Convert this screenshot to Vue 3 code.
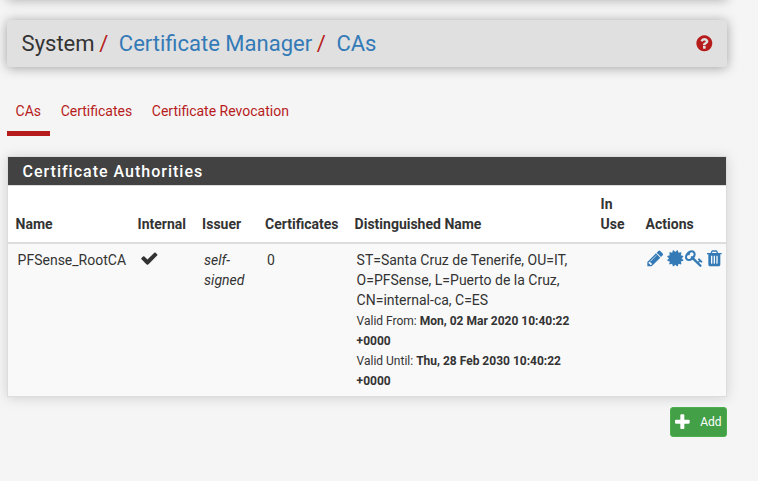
<script setup>
const icons = {
  help: 'M1024 1376v-192q0-14-9-23t-23-9h-192q-14 0-23 9t-9 23v192q0 14 9 23t23 9h192q14 0 23-9t9-23zm256-672q0-88-55.5-163t-138.5-116-170-41q-243 0-371 213-15 24 8 42l132 100q7 6 19 6 16 0 25-12 53-68 86-92 34-24 86-24 48 0 85.5 26t37.5 59q0 38-20 61t-68 45q-63 28-115.5 86.5t-52.5 125.5v36q0 14 9 23t23 9h192q14 0 23-9t9-23q0-19 21.5-49.5t54.5-49.5q32-18 49-28.5t46-35 44.5-48 28-60.5 12.5-81zm384 192q0 209-103 385.5t-279.5 279.5-385.5 103-385.5-103-279.5-279.5-103-385.5 103-385.5 279.5-279.5 385.5-103 385.5 103 279.5 279.5 103 385.5z',
  check: 'M1671 566q0 40-28 68l-724 724-136 136q-28 28-68 28t-68-28l-136-136-362-362q-28-28-28-68t28-68l136-136q28-28 68-28t68 28l294 295 656-657q28-28 68-28t68 28l136 136q28 28 28 68z',
  plus: 'M1600 736v192q0 40-28 68t-68 28h-416v416q0 40-28 68t-68 28h-192q-40 0-68-28t-28-68v-416h-416q-40 0-68-28t-28-68v-192q0-40 28-68t68-28h416v-416q0-40 28-68t68-28h192q40 0 68 28t28 68v416h416q40 0 68 28t28 68z'
}
const actions = [
  { name: 'Edit', d: 'M491 1536l91-91-235-235-91 91v107h128v128h107zm523-928q0-22-22-22-10 0-17 7l-542 542q-7 7-7 17 0 22 22 22 10 0 17-7l542-542q7-7 7-17zm-54-192l416 416-832 832h-416v-416zm683 96q0 53-37 90l-166 166-416-416 166-165q36-38 90-38 53 0 91 38l235 234q37 39 37 91z' },
  { name: 'Export CA', d: 'M1504 896l138 135q30 28 20 70-12 41-52 51l-188 48 53 186q12 41-19 70-29 31-70 19l-186-53-48 188q-10 40-51 52-12 2-19 2-31 0-51-22l-135-138-135 138q-28 30-70 20-41-11-51-52l-48-188-186 53q-41 12-70-19-31-29-19-70l53-186-188-48q-40-10-52-51-10-42 20-70l138-135-138-135q-30-28-20-70 12-41 52-51l188-48-53-186q-12-41 19-70 29-31 70-19l186 53 48-188q10-41 51-51 41-12 70 19l135 139 135-139q29-30 70-19 41 10 51 51l48 188 186-53q41-12 70 19 31 29 19 70l-53 186 188 48q40 10 52 51 10 42-20 70z' },
  { name: 'Export key', d: 'M832 512q0-80-56-136t-136-56-136 56-56 136q0 42 19 83-41-19-83-19-80 0-136 56t-56 136 56 136 136 56 136-56 56-136q0-42-19-83 41 19 83 19 80 0 136-56t56-136zm851 704q0 17-49 66t-66 49q-9 0-28.5-16t-36.5-33-38.5-40-24.5-26l-96 96 220 220q28 28 28 68 0 42-39 81t-81 39q-40 0-68-28l-671-671q-176 131-365 131-163 0-265.5-102.5t-102.5-265.5q0-160 95-313t248-248 313-95q163 0 265.5 102.5t102.5 265.5q0 189-131 365l355 355 96-96q-3-3-26-24.5t-40-38.5-33-36.5-16-28.5q0-17 49-66t66-49q13 0 23 10 6 6 46 44.5t82 79.5 86.5 86 73 78 28.5 41z' },
  { name: 'Delete CA', d: 'M704 1376v-704q0-14-9-23t-23-9h-64q-14 0-23 9t-9 23v704q0 14 9 23t23 9h64q14 0 23-9t9-23zm256 0v-704q0-14-9-23t-23-9h-64q-14 0-23 9t-9 23v704q0 14 9 23t23 9h64q14 0 23-9t9-23zm256 0v-704q0-14-9-23t-23-9h-64q-14 0-23 9t-9 23v704q0 14 9 23t23 9h64q14 0 23-9t9-23zm-544-992h448l-48-117q-7-9-17-11h-317q-10 2-17 11zm928 32v64q0 14-9 23t-23 9h-96v948q0 83-47 143.5t-113 60.5h-832q-66 0-113-58.5t-47-141.5v-952h-96q-14 0-23-9t-9-23v-64q0-14 9-23t23-9h309l70-167q15-37 54-63t79-26h320q40 0 79 26t54 63l70 167h309q14 0 23 9t9 23z' }
]
const tabs = ['CAs', 'Certificates', 'Certificate Revocation']
</script>

<template>
  <div class="page">
    <div class="topbar"></div>
    <header class="header">
      <ol class="crumbs">
        <li>System</li>
        <li><a>Certificate Manager</a></li>
        <li><a>CAs</a></li>
      </ol>
      <svg class="icon help" viewBox="0 0 1792 1792"><path :d="icons.help" /></svg>
    </header>
    <nav class="tabs">
      <a v-for="(t, i) in tabs" :key="t" :class="{ active: i === 0 }">{{ t }}</a>
    </nav>
    <section class="panel">
      <h2>Certificate Authorities</h2>
      <table>
        <colgroup>
          <col class="c-name" /><col class="c-internal" /><col class="c-issuer" /><col class="c-certs" />
          <col class="c-dn" /><col class="c-use" /><col class="c-actions" />
        </colgroup>
        <thead>
          <tr>
            <th>Name</th><th>Internal</th><th>Issuer</th><th>Certificates</th>
            <th>Distinguished Name</th><th>In<br />Use</th><th>Actions</th>
          </tr>
        </thead>
        <tbody>
          <tr>
            <td>PFSense_RootCA</td>
            <td><svg class="icon check" viewBox="0 0 1792 1792"><path :d="icons.check" /></svg></td>
            <td><i>self-<br />signed</i></td>
            <td>0</td>
            <td>
              ST=Santa Cruz de Tenerife, OU=IT,<br />O=PFSense, L=Puerto de la Cruz,<br />CN=internal-ca, C=ES
              <div class="validity first">Valid From: <b>Mon, 02 Mar 2020 10:40:22<br />+0000</b></div>
              <div class="validity">Valid Until: <b>Thu, 28 Feb 2030 10:40:22<br />+0000</b></div>
            </td>
            <td></td>
            <td class="actions-cell">
              <div class="actions">
                <svg v-for="a in actions" :key="a.name" class="icon" viewBox="0 0 1792 1792"><path :d="a.d" /></svg>
              </div>
            </td>
          </tr>
        </tbody>
      </table>
    </section>
    <div class="footer">
      <button class="add"><svg class="icon" viewBox="0 0 1792 1792"><path :d="icons.plus" /></svg><span>Add</span></button>
    </div>
  </div>
</template>

<style>
body {
  background: #f5f5f5;
}
</style>

<style scoped>
.page {
  box-sizing: border-box;
  width: 758px;
  height: 481px;
  padding: 0 31px 0 7px;
  overflow: hidden;
  font: 14px/20px Roboto, sans-serif;
  color: #333;
}
.topbar {
  height: 20px;
  margin-top: -20px;
  margin-bottom: 20px;
  box-shadow: 0 0 12px rgba(0, 0, 0, 0.3);
}
.icon {
  display: block;
  width: 18.67px;
  height: 18.67px;
  fill: currentColor;
}
.header {
  display: flex;
  align-items: center;
  justify-content: space-between;
  box-sizing: border-box;
  height: 47px;
  padding: 0 13.3px 0 14.6px;
  background: #e0e0e0;
  border-radius: 3px;
  box-shadow: 0 1px 12px rgba(0, 0, 0, 0.35);
}
.crumbs {
  display: flex;
  margin: 0;
  padding: 0;
  list-style: none;
  font-size: 22px;
  line-height: 24px;
}
.crumbs li + li::before {
  content: '/';
  color: #b71c1c;
  padding: 0 10.6px 0 4.6px;
}
.crumbs a {
  color: #337ab7;
}
.help {
  color: #b71c1c;
}
.tabs {
  display: flex;
  margin-top: 24px;
  gap: 2px;
}
.tabs a {
  padding: 10px 9px 10px 8.6px;
  color: #b71c1c;
  border-bottom: 5px solid transparent;
}
.tabs .active {
  border-bottom-color: #b71c1c;
}
.panel {
  box-sizing: border-box;
  margin-top: 20px;
  height: 241px;
  border: 1px solid #ddd;
  background: #f9f9f9;
  box-shadow: 0 1px 12px rgba(0, 0, 0, 0.15);
}
h2 {
  box-sizing: border-box;
  height: 29px;
  margin: 0;
  padding: 0 14.5px;
  background: #424242;
  color: #fff;
  border-bottom: 1px solid #ddd;
  font-size: 16px;
  font-weight: 500;
  line-height: 29px;
  letter-spacing: 1px;
}
table {
  width: 718px;
  table-layout: fixed;
  border-collapse: separate;
  border-spacing: 0;
}
.c-name { width: 122px; }
.c-internal { width: 64.5px; }
.c-issuer { width: 63px; }
.c-certs { width: 89.5px; }
.c-dn { width: 246px; }
.c-use { width: 45px; }
.c-actions { width: 88px; }
th {
  height: 40px;
  padding: 8px 0 8px 7.6px;
  background: #fff;
  border-bottom: 2px solid #ddd;
  text-align: left;
  vertical-align: bottom;
  font-weight: 700;
  white-space: nowrap;
}
td {
  padding: 6px 0 0 9.6px;
  vertical-align: top;
  white-space: nowrap;
}
.check {
  margin-top: -1px;
}
.validity {
  font-size: 12px;
}
.validity.first {
  margin-top: 1px;
}
.actions-cell {
  padding: 5px 0 0 8px;
}
.actions {
  display: flex;
  gap: 1px;
}
.actions .icon {
  flex: none;
  color: #337ab7;
}
.footer {
  display: flex;
  justify-content: flex-end;
  margin-top: 10px;
}
.add {
  display: flex;
  align-items: center;
  box-sizing: border-box;
  width: 57px;
  height: 30px;
  padding: 0 0 0 2px;
  gap: 8.5px;
  border: 1px solid #4cae4c;
  border-radius: 3px;
  background: #43a047;
  color: #fff;
  font: 12px/18px Roboto, sans-serif;
}
</style>
